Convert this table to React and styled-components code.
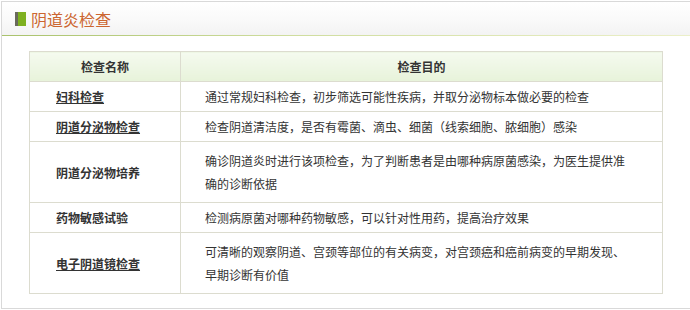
import React from "react";
import styled, { createGlobalStyle } from "styled-components";

const rows = [
  {
    name: "妇科检查",
    link: true,
    purpose: "通过常规妇科检查，初步筛选可能性疾病，并取分泌物标本做必要的检查",
  },
  {
    name: "阴道分泌物检查",
    link: true,
    purpose: "检查阴道清洁度，是否有霉菌、滴虫、细菌（线索细胞、脓细胞）感染",
  },
  {
    name: "阴道分泌物培养",
    tall: true,
    purpose: ["确诊阴道炎时进行该项检查，为了判断患者是由哪种病原菌感染，为医生提供准", "确的诊断依据"],
  },
  {
    name: "药物敏感试验",
    purpose: "检测病原菌对哪种药物敏感，可以针对性用药，提高治疗效果",
  },
  {
    name: "电子阴道镜检查",
    link: true,
    tall: true,
    purpose: ["可清晰的观察阴道、宫颈等部位的有关病变，对宫颈癌和癌前病变的早期发现、", "早期诊断有价值"],
  },
];

function App() {
  return (
    <>
      <GlobalStyle />
      <Panel>
        <PanelHeader>
          <TitleMark />
          <Title>阴道炎检查</Title>
        </PanelHeader>
        <PanelBody>
          <Table>
            <colgroup>
              <col style={{ width: 151 }} />
              <col />
            </colgroup>
            <thead>
              <tr>
                <HeadCell>检查名称</HeadCell>
                <HeadCell>检查目的</HeadCell>
              </tr>
            </thead>
            <tbody>
              {rows.map((row) => (
                <tr key={row.name}>
                  <NameCell $tall={row.tall}>
                    {row.link ? <NameLink>{row.name}</NameLink> : row.name}
                  </NameCell>
                  <PurposeCell $tall={row.tall}>
                    {Array.isArray(row.purpose)
                      ? row.purpose.map((line) => <Line key={line}>{line}</Line>)
                      : row.purpose}
                  </PurposeCell>
                </tr>
              ))}
            </tbody>
          </Table>
        </PanelBody>
      </Panel>
    </>
  );
}

export default App;

const GlobalStyle = createGlobalStyle`
  body {
    margin: 0;
    overflow: hidden;
    background: #fff;
    font-family: "Noto Sans CJK SC", "Liberation Sans", sans-serif;
  }
`;

const Panel = styled.div`
  margin: 1px 0 0 1px;
  width: 720px;
  border: 1px solid #d9d9d9;
  background: #fff;
`;

const PanelHeader = styled.div`
  display: flex;
  align-items: center;
  height: 33px;
  padding-left: 13px;
  background: linear-gradient(to bottom, #ffffff 0%, #f9f9f9 60%, #f3f3f3 100%);
  border-bottom: 1px solid;
  border-image: linear-gradient(to right, #a9c26c, #cfdd9e 40%, #eef1cc) 1;
`;

const TitleMark = styled.span`
  width: 11px;
  height: 14px;
  margin-right: 5px;
  background: linear-gradient(to right, #6a6a5c 0 3px, #7eb020 3px);
`;

const Title = styled.h2`
  margin: 0;
  font-size: 16px;
  font-weight: normal;
  color: #cc6630;
  line-height: 20px;
`;

const PanelBody = styled.div`
  padding: 15px 0 14px 27px;
`;

const Table = styled.table`
  width: 634px;
  border-collapse: collapse;
  table-layout: fixed;
  font-size: 12px;
  color: #333;
`;

const HeadCell = styled.th`
  padding: 3px 0;
  line-height: 23px;
  text-align: center;
  font-weight: bold;
  color: #333;
  border: 1px solid #dcdccf;
  background: linear-gradient(to bottom, #f5faef, #e7f3da);
`;

const NameCell = styled.td`
  padding: ${(p) => (p.$tall ? "7px" : "3px")} 0 ${(p) => (p.$tall ? "7px" : "3px")} 26px;
  line-height: 23px;
  font-weight: bold;
  border: 1px solid #dcdccf;
`;

const NameLink = styled.span`
  text-decoration: underline;
  color: #333;
`;

const PurposeCell = styled.td`
  padding: ${(p) => (p.$tall ? "7px" : "3px")} 0 ${(p) => (p.$tall ? "7px" : "3px")} 24px;
  line-height: 23px;
  color: #333;
  border: 1px solid #dcdccf;
  white-space: nowrap;
`;

const Line = styled.div``;
